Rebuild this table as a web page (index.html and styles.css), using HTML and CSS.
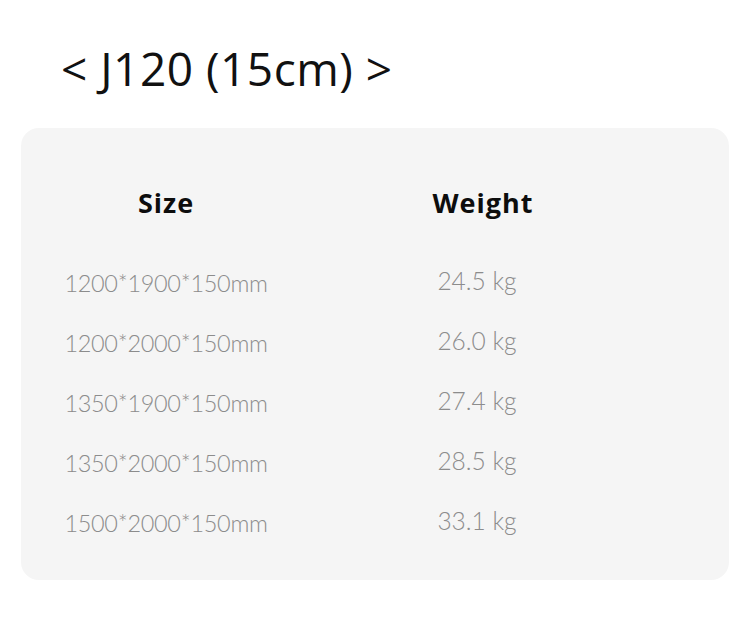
FILE: index.html
```html
<!DOCTYPE html>
<html lang="en">
<head>
    <meta charset="UTF-8">
    <meta name="viewport" content="width=device-width, initial-scale=1.0">
    <title>J120 (15cm)</title>
    <link rel="stylesheet" href="styles.css">
</head>
<body>

<header class="model-title">
    <h1>&lt; J120 (15cm) &gt;</h1>
</header>

<div class="spec-card">
    <div class="spec-table">
        <div class="spec-head">Size</div>
        <div class="spec-head">Weight</div>

        <div class="spec-size">1200*1900*150mm</div>
        <div class="spec-weight">24.5 kg</div>

        <div class="spec-size">1200*2000*150mm</div>
        <div class="spec-weight">26.0 kg</div>

        <div class="spec-size">1350*1900*150mm</div>
        <div class="spec-weight">27.4 kg</div>

        <div class="spec-size">1350*2000*150mm</div>
        <div class="spec-weight">28.5 kg</div>

        <div class="spec-size">1500*2000*150mm</div>
        <div class="spec-weight">33.1 kg</div>
    </div>
</div>

</body>
</html>
```

FILE: styles.css
```css
body {
    margin: 0;
    padding: 0;
    background-color: #ffffff;
    font-family: 'Open Sans', 'Noto Sans', sans-serif;
    color: #111;
}

.model-title {
    padding: 38px 0 0 61px;
    height: 128px;
    box-sizing: border-box;
}

.model-title h1 {
    margin: 0;
    font-size: 46px;
    font-weight: 400;
    letter-spacing: 0.5px;
    line-height: 60px;
    color: #111;
}

.spec-card {
    margin: 0 21px;
    height: 452px;
    background-color: #f5f5f5;
    border-radius: 18px;
    box-sizing: border-box;
    padding-top: 55px;
}

.spec-table {
    display: grid;
    grid-template-columns: 290px 344px;
}

.spec-head {
    text-align: center;
    font-size: 27px;
    font-weight: 700;
    letter-spacing: 1px;
    line-height: 40px;
    height: 70px;
    color: #0d0d0d;
}

.spec-size,
.spec-weight {
    text-align: center;
    font-family: 'Lato', sans-serif;
    font-weight: 300;
    font-size: 23.5px;
    letter-spacing: -0.3px;
    line-height: 60px;
    color: #8c8c8c;
}

.spec-weight {
    font-size: 24.5px;
    letter-spacing: 0;
    line-height: 56px;
    padding-right: 12px;
    padding-bottom: 4px;
}
```
